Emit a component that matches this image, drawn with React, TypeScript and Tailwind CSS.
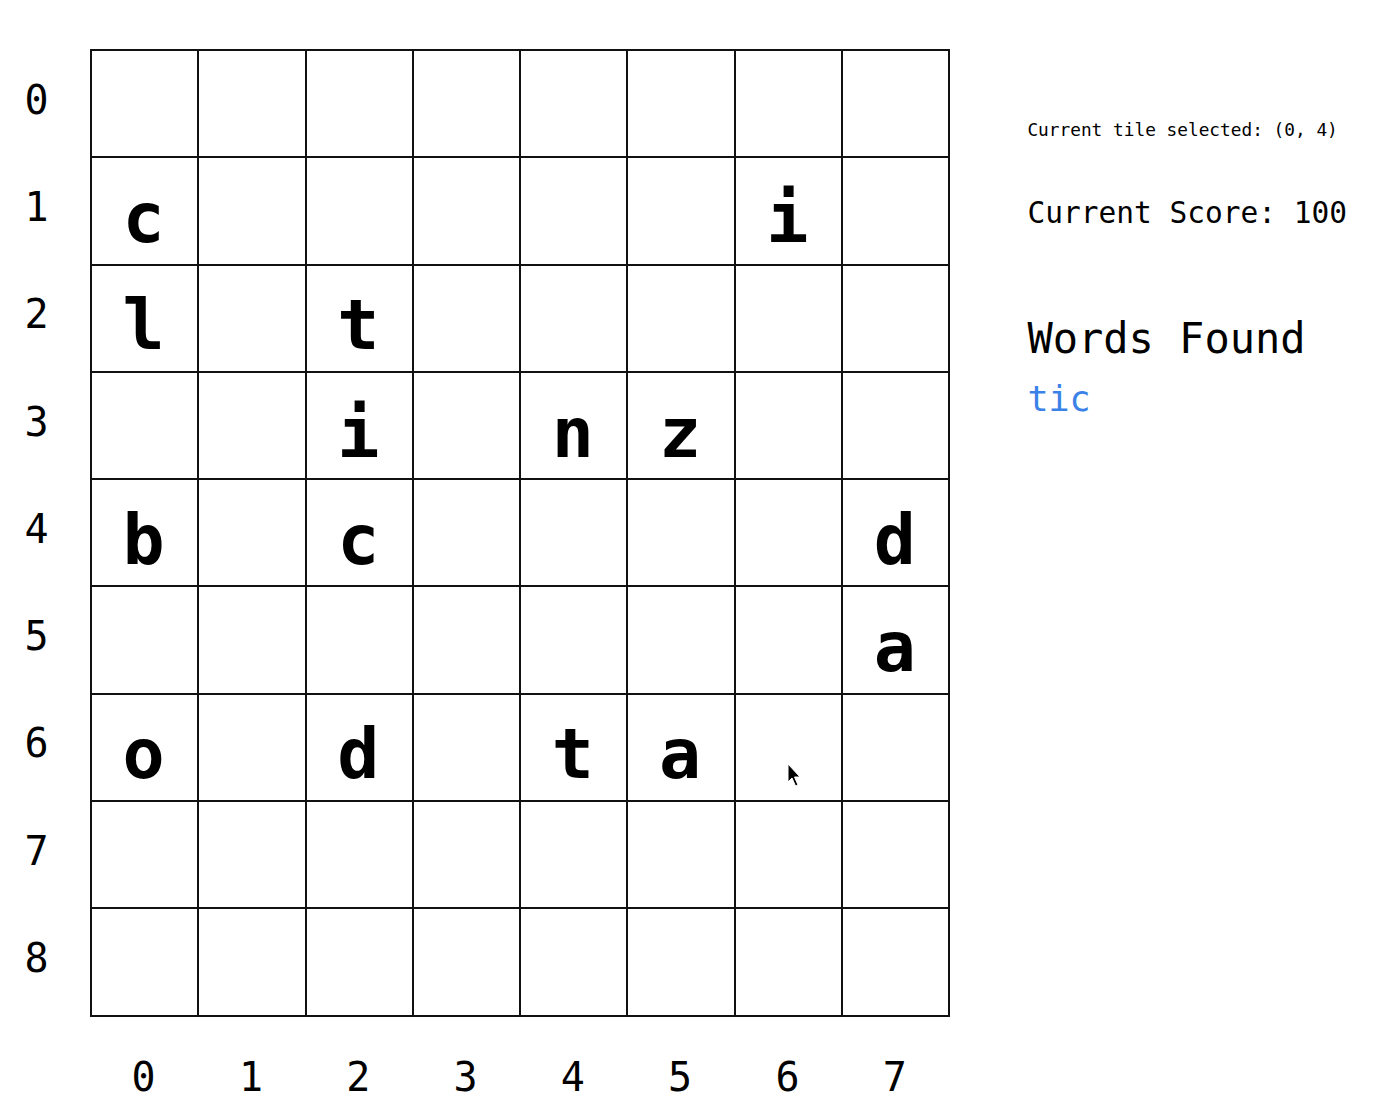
import React from "react";

const board: string[][] = [
    ["", "", "", "", "", "", "", ""],
    ["c", "", "", "", "", "", "i", ""],
    ["l", "", "t", "", "", "", "", ""],
    ["", "", "i", "", "n", "z", "", ""],
    ["b", "", "c", "", "", "", "", "d"],
    ["", "", "", "", "", "", "", "a"],
    ["o", "", "d", "", "t", "a", "", ""],
    ["", "", "", "", "", "", "", ""],
    ["", "", "", "", "", "", "", ""],
];

const mono = { fontFamily: '"DejaVu Sans Mono", "Liberation Mono", monospace' };

function Cursor() {
    return (
        <svg className="absolute left-[787px] top-[763px]" width="16" height="26" viewBox="0 0 16 26">
            <path d="M1 1 L1 19 L5 15 L8.5 23 L11 22 L7.5 14 L13 14 Z" fill="#000" stroke="#fff" strokeWidth="1" />
        </svg>
    );
}

export default function App() {
    return (
        <div className="relative w-[1374px] h-[1108px] bg-white text-black flex" style={mono}>
            <div className="flex flex-col pt-[49px]">
                <div className="flex">
                    {/* row numbers */}
                    <div className="w-[91px] flex flex-col gap-[2px] pt-[2px]">
                        {board.map((_, r) => (
                            <div key={r} className="h-[105.3px] w-[73px] flex items-center justify-center text-[40px] leading-none">
                                <span className="-translate-y-[4px]">{r}</span>
                            </div>
                        ))}
                    </div>

                    {/* board */}
                    <div className="-ml-[1px] grid grid-cols-[repeat(8,105.3px)] auto-rows-[105.3px] gap-[2px] p-[2px] bg-[#111]">
                        {board.flatMap((row, r) =>
                            row.map((ch, c) => (
                                <div key={`${r}-${c}`} className="bg-white flex items-center justify-center text-[70px] font-bold leading-none">
                                    <span className="translate-y-[7px] -translate-x-[1px]">{ch}</span>
                                </div>
                            ))
                        )}
                    </div>
                </div>

                {/* column numbers */}
                <div className="flex pl-[91px] gap-[2px] mt-[40px]">
                    {board[0].map((_, c) => (
                        <div key={c} className="w-[105.3px] flex justify-center text-[40px] leading-none">
                            {c}
                        </div>
                    ))}
                </div>
            </div>

            <div className="ml-[77px] pt-[121px] flex flex-col">
                <p className="text-[17.8px] leading-none">Current tile selected: (0, 4)</p>
                <p className="text-[29.5px] leading-none mt-[60px]">Current Score: 100</p>
                <p className="text-[42px] leading-none mt-[90px]">Words Found</p>
                <p className="text-[35px] leading-none mt-[22px] text-[#3b82e8]">tic</p>
            </div>

            <Cursor />
        </div>
    );
}
